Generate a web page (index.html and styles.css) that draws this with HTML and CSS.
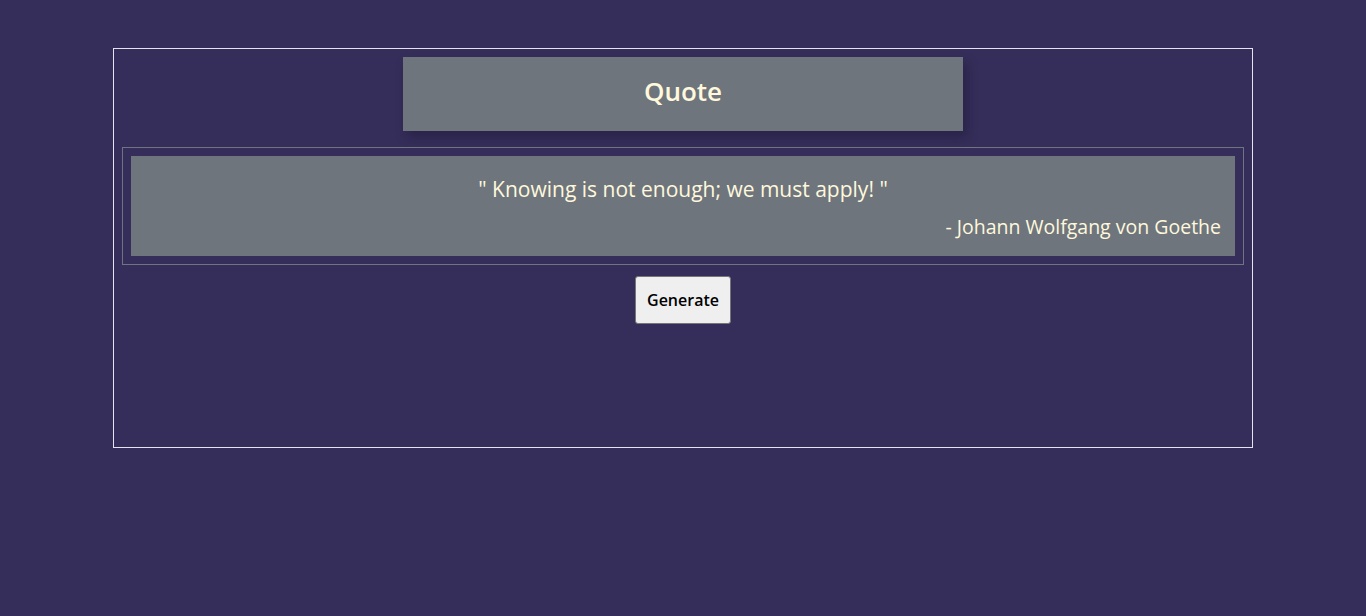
FILE: index.html
```html
<!DOCTYPE html>
<html>
<head>
<meta charset="utf-8">
<link rel="stylesheet" href="styles.css">
</head>
<body>
<main class="frame">
  <h1 class="title">Quote</h1>
  <section class="quote-wrap">
    <div class="quote-card">
      <p class="quote-text">" Knowing is not enough; we must apply! "</p>
      <p class="quote-author">- Johann Wolfgang von Goethe</p>
    </div>
  </section>
  <div class="actions">
    <button class="gen-btn">Generate</button>
  </div>
</main>
</body>
</html>
```
FILE: styles.css
```css
html, body {
  margin: 0;
  padding: 0;
  background: #352e5a;
  font-family: "Open Sans", "Noto Sans", sans-serif;
}
body {
  padding-top: 48px;
  height: 616px;
  box-sizing: border-box;
}
.frame {
  width: 1140px;
  height: 400px;
  margin: 0 auto;
  box-sizing: border-box;
  border: 1px solid #e6e3ee;
  padding: 8px;
  display: flex;
  flex-direction: column;
  align-items: center;
}
.title {
  margin: 0;
  width: 560px;
  height: 74px;
  box-sizing: border-box;
  padding-bottom: 6px;
  background: #6e757d;
  color: #fff8dc;
  font-size: 26px;
  font-weight: 600;
  display: flex;
  align-items: center;
  justify-content: center;
  box-shadow: 4px 6px 10px rgba(20, 15, 40, 0.35);
}
.quote-wrap {
  margin-top: 16px;
  width: 100%;
  box-sizing: border-box;
  border: 1px solid #6e7480;
  padding: 8px;
}
.quote-card {
  background: #6e757d;
  height: 100px;
  box-sizing: border-box;
  padding: 19px 14px 0;
  color: #fff8dc;
}
.quote-text {
  margin: 0;
  text-align: center;
  font-size: 21px;
  line-height: 28px;
}
.quote-author {
  margin: 11px 0 0;
  text-align: right;
  font-size: 19.5px;
  line-height: 26px;
}
.actions {
  margin-top: 11px;
  display: flex;
  justify-content: center;
}
.gen-btn {
  width: 96px;
  height: 48px;
  background: #efefef;
  border: 1px solid #767676;
  border-radius: 3px;
  font-family: "Open Sans", "Noto Sans", sans-serif;
  font-size: 16px;
  font-weight: 600;
  color: #000;
  padding: 0;
}
```
